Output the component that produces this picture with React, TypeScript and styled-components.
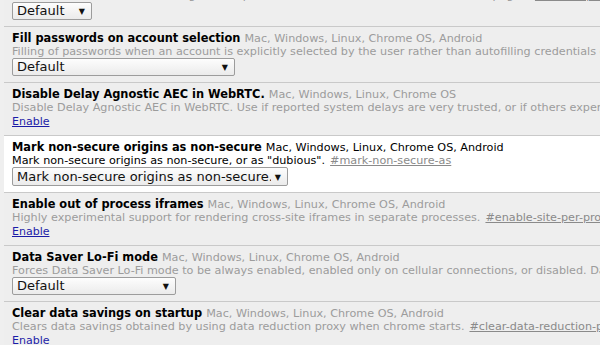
import styled, { createGlobalStyle } from "styled-components";
import React from "react";

const GlobalStyle = createGlobalStyle`
  html, body {
    margin: 0;
    padding: 0;
    background: #efefef;
    overflow: hidden;
  }
  body {
    font-family: "DejaVu Sans", "Liberation Sans", sans-serif;
    font-size: 11.2px;
    color: #000;
  }
`;

const Page = styled.div`
  width: 600px;
  height: 345px;
  overflow: hidden;
`;

const ExperimentList = styled.div`
  margin: -29px 0 0 4px;
  display: flex;
  flex-direction: column;
`;

const Experiment = styled.div<{ $enabled?: boolean }>`
  padding: 5px 8px 6px;
  background: ${(p) => (p.$enabled ? "#ffffff" : "#eeeeee")};
  border-bottom: 1px solid #c9c9c9;
  white-space: nowrap;
  color: ${(p) => (p.$enabled ? "#000" : "#9c9c9c")};
`;

const Header = styled.div`
  line-height: 13px;
`;

const Title = styled.span`
  font-weight: bold;
  font-size: 11.4px;
  color: #000;
`;

const Platforms = styled.span`
  margin-left: 4px;
`;

const Description = styled.div`
  line-height: 13px;
`;

const Permalink = styled.a`
  color: #8a8a8a;
  text-decoration: underline;
  margin-left: 5px;
`;

const ActionLink = styled.a`
  display: inline-block;
  margin-top: 1px;
  line-height: 14px;
  font-size: 11px;
  color: #1c1ca8;
  text-decoration: underline;
  cursor: pointer;
`;

const SelectWrap = styled.div<{ $width: number; $tall?: boolean }>`
  position: relative;
  width: ${(p) => p.$width}px;
  height: ${(p) => (p.$tall ? 19 : 18)}px;
`;

const Select = styled.select`
  appearance: none;
  -webkit-appearance: none;
  width: 100%;
  height: 100%;
  margin: 0;
  padding: 0 16px 0 4px;
  box-sizing: border-box;
  border: 1px solid #9c9c9c;
  border-radius: 2px;
  background: linear-gradient(#fdfdfd, #ebebeb);
  font-family: "DejaVu Sans", sans-serif;
  font-size: 13px;
  color: #111;
  line-height: 16px;
`;

const Arrow = styled.span`
  position: absolute;
  right: 7px;
  top: 50%;
  transform: translateY(-50%);
  font-size: 8px;
  color: #111;
  pointer-events: none;
`;

type Flag = {
  title: string;
  platforms: string;
  description: string;
  permalink: string;
  enabled?: boolean;
  select?: { value: string; width: number; tall?: boolean };
};

const flags: Flag[] = [
  {
    title: "Enable password generation",
    platforms: "Mac, Windows, Linux, Chrome OS, Android",
    description:
      "Allow the user to have Chrome generate passwords when it detects account creation pages.",
    permalink: "#enable-password-generation",
    select: { value: "Default", width: 80 },
  },
  {
    title: "Fill passwords on account selection",
    platforms: "Mac, Windows, Linux, Chrome OS, Android",
    description:
      "Filling of passwords when an account is explicitly selected by the user rather than autofilling credentials on page load.",
    permalink: "#fill-on-account-select",
    select: { value: "Default", width: 223 },
  },
  {
    title: "Disable Delay Agnostic AEC in WebRTC.",
    platforms: "Mac, Windows, Linux, Chrome OS",
    description:
      "Disable Delay Agnostic AEC in WebRTC. Use if reported system delays are very trusted, or if others experience echo.",
    permalink: "#disable-delay-agnostic-aec",
  },
  {
    title: "Mark non-secure origins as non-secure",
    platforms: "Mac, Windows, Linux, Chrome OS, Android",
    description: 'Mark non-secure origins as non-secure, or as "dubious".',
    permalink: "#mark-non-secure-as",
    enabled: true,
    select: { value: "Mark non-secure origins as non-secure.", width: 276, tall: true },
  },
  {
    title: "Enable out of process iframes",
    platforms: "Mac, Windows, Linux, Chrome OS, Android",
    description:
      "Highly experimental support for rendering cross-site iframes in separate processes.",
    permalink: "#enable-site-per-process",
  },
  {
    title: "Data Saver Lo-Fi mode",
    platforms: "Mac, Windows, Linux, Chrome OS, Android",
    description:
      "Forces Data Saver Lo-Fi mode to be always enabled, enabled only on cellular connections, or disabled. Data Saver must be enabled for Lo-Fi mode to be used.",
    permalink: "#enable-data-reduction-proxy-lo-fi",
    select: { value: "Default", width: 164 },
  },
  {
    title: "Clear data savings on startup",
    platforms: "Mac, Windows, Linux, Chrome OS, Android",
    description:
      "Clears data savings obtained by using data reduction proxy when chrome starts.",
    permalink: "#clear-data-reduction-proxy-data-savings",
  },
];

const App = () => {
  return (
    <Page>
      <GlobalStyle />
      <ExperimentList>
        {flags.map((flag) => (
          <Experiment key={flag.permalink} $enabled={flag.enabled}>
            <Header>
              <Title>{flag.title}</Title>
              <Platforms>{flag.platforms}</Platforms>
            </Header>
            <Description>
              {flag.description}
              <Permalink href={flag.permalink}>{flag.permalink}</Permalink>
            </Description>
            {flag.select ? (
              <SelectWrap $width={flag.select.width} $tall={flag.select.tall}>
                <Select defaultValue={flag.select.value}>
                  <option>{flag.select.value}</option>
                </Select>
                <Arrow>▼</Arrow>
              </SelectWrap>
            ) : (
              <ActionLink>Enable</ActionLink>
            )}
          </Experiment>
        ))}
      </ExperimentList>
    </Page>
  );
};

export default App;
